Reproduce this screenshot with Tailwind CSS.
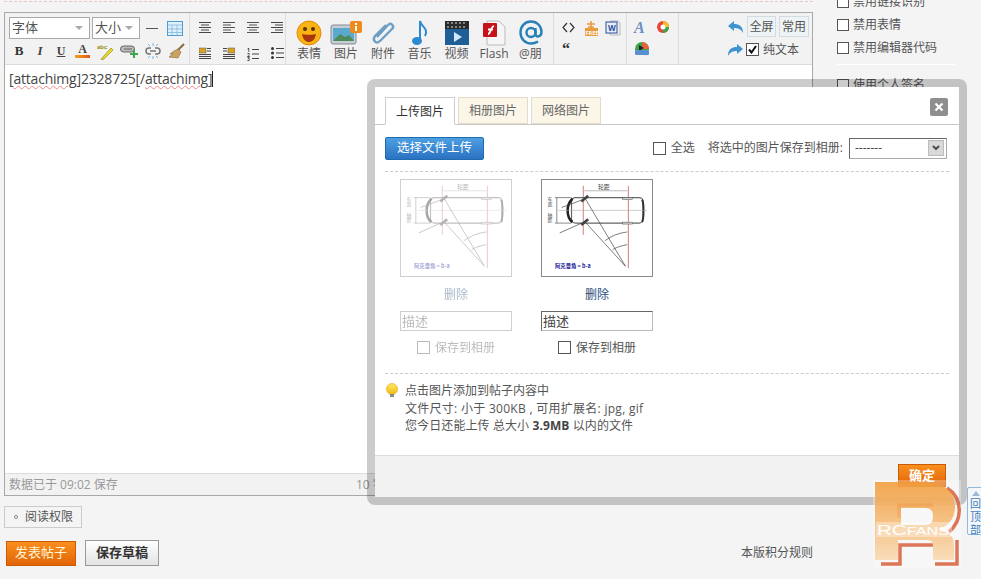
<!DOCTYPE html>
<html lang="zh">
<head>
<meta charset="utf-8">
<script src="https://cdn.jsdelivr.net/npm/@tailwindcss/browser@4"></script>
</head>
<body class="bg-[#f4f4f4]">
<svg width="0" height="0" class="absolute">
  <defs>
    <symbol id="car" viewBox="0 0 112 98">
      <g fill="none" stroke="#555" stroke-width="1">
        <path d="M43 11h44" stroke="#999" stroke-width=".7"/>
        <path d="M42 6v50M88 6v84" stroke="#b44" stroke-width=".7"/>
        <rect x="30" y="18" width="73" height="26" rx="4" stroke="#666" stroke-width="1.200"/>
        <path d="M31 19c-3 3-5 7-5 12s2 10 5 12" stroke="#222" stroke-width="2.600"/>
        <path d="M102 20c2 3 2 19 0 23" stroke="#333" stroke-width="2"/>
        <path d="M17 31h90" stroke="#aaa" stroke-width=".6"/>
        <path d="M13 18h17M13 44h17M15 18v26" stroke="#555" stroke-width=".7"/>
        <path d="M40 22l7-6M40 46l7-6" stroke="#444" stroke-width="2.600"/>
        <path d="M44 19l41 69M44 43l41 45M20 28l27-10M18 54l29-13" stroke="#444" stroke-width=".7"/>
        <path d="M64 62c7-5 14-8 23-9M72 71c5-3 10-4 15-5" stroke="#444" stroke-width=".7"/>
        <rect x="82" y="18" width="10" height="2" fill="#ccc" stroke="#555" stroke-width=".5"/>
        <rect x="82" y="43" width="10" height="2" fill="#ccc" stroke="#555" stroke-width=".5"/>
      </g>
      <text x="57" y="9" font-size="6" fill="#444" font-family="Noto Sans CJK SC">轮距</text>
      <text x="8" y="17" font-size="5" fill="#444" font-family="Noto Sans CJK SC" writing-mode="tb">车宽</text>
      <text x="8" y="33" font-size="5" fill="#444" font-family="Noto Sans CJK SC" writing-mode="tb">轴距</text>
      <text x="13" y="90" font-size="5.500" fill="#1a1a9a" font-weight="bold" font-family="Noto Sans CJK SC">阿克曼角 = b-a</text>
    </symbol>
    <symbol id="dn" viewBox="0 0 8 4"><path d="M0 0h8L4 4z" fill="#aaa"/></symbol>
    <linearGradient id="bulb" x1="0" y1="0" x2="0" y2="1"><stop offset="0" stop-color="#ffe96b"/><stop offset="1" stop-color="#f2b90d"/></linearGradient>
    <linearGradient id="rbody" x1="0" y1="0" x2="0" y2="1"><stop offset="0" stop-color="#f19a35" stop-opacity=".85"/><stop offset="1" stop-color="#f9dcb8" stop-opacity=".95"/></linearGradient>
  </defs>
</svg>

<div class="relative w-[981px] h-[579px] overflow-hidden text-[12px] text-[#444] font-['Open_Sans','Noto_Sans_CJK_SC',sans-serif]">
  <div class="flex">
    <!-- main column -->
    <main class="w-[809px] ml-[4px] shrink-0">
      <div class="h-[12px] border-t border-dashed border-[#f0c4c4] mt-[1px] -mb-[1px]"></div>
      <div class="h-[484px] border border-[#a8a8a8] flex flex-col bg-white">
        <!-- toolbar -->
        <div class="h-[52px] bg-[#f2f2f2] border-b border-[#dcdcdc] flex shrink-0">
          <!-- font group -->
          <div class="w-[181px] ml-[4px] pt-[4px] border-r border-[#dcdcdc] shrink-0">
            <div class="flex items-center h-[22px]">
              <div class="w-[81px] h-[22px] bg-white border border-[#aaa] flex items-center justify-between pl-[2px] pr-[6px] text-[13px] text-[#555]">字体<svg width="8" height="4"><use href="#dn"/></svg></div>
              <div class="w-[48px] h-[22px] ml-[2px] bg-white border border-[#aaa] flex items-center justify-between pl-[2px] pr-[6px] text-[13px] text-[#555]">大小<svg width="8" height="4"><use href="#dn"/></svg></div>
              <div class="w-[12px] h-[1px] bg-[#555] ml-[6px]"></div>
              <svg class="ml-[9px]" width="16" height="15" viewBox="0 0 16 15"><rect x=".5" y=".5" width="15" height="14" fill="#dff0fb" stroke="#4f9bd2"/><path d="M1 4h14M1 8h14M1 11.500h14M5 4v10M10 4v10" stroke="#8fc3e6"/></svg>
            </div>
            <div class="flex items-center h-[22px] mt-[1px] gap-[7px] pl-[3px]">
              <span class="w-[14px] text-center font-bold font-['Liberation_Serif'] text-[13px] text-[#333]">B</span>
              <span class="w-[14px] text-center italic font-bold font-['Liberation_Serif'] text-[13px] text-[#444]">I</span>
              <span class="w-[14px] text-center underline font-bold font-['Liberation_Serif'] text-[12px] text-[#444]">U</span>
              <span class="w-[15px] flex flex-col items-center leading-[11px] font-bold font-['Liberation_Serif'] text-[12px] text-[#444]">A<span class="w-[15px] h-[3px] bg-gradient-to-r from-[#f2a01e] to-[#e0561a]"></span></span>
              <svg width="16" height="17" viewBox="0 0 16 17"><path d="M5 15l9-10 2 2-9 9-3 1z" fill="#e8d92e" stroke="#9b8d10" stroke-width=".7"/><text x="0" y="6" font-size="6" font-weight="bold" fill="#9a8a10" font-family="Liberation Sans">abc</text></svg>
              <svg width="18" height="14" viewBox="0 0 18 14"><rect x=".5" y="2" width="14" height="6" rx="3" fill="#bbb" stroke="#666"/><path d="M4 5h8" stroke="#666"/><path d="M13 6h2v3h3v2h-3v3h-2v-3h-3V9h3z" fill="#3ca64a"/></svg>
              <svg width="16" height="16" viewBox="0 0 16 16"><path d="M6 5H4a3 3 0 000 6h2M10 5h2a3 3 0 010 6h-2M5 8h6" fill="none" stroke="#777" stroke-width="1.500"/><path d="M8 0v3M8 13v3M3 1l2 2M13 1l-2 2M3 15l2-2M13 15l-2-2" stroke="#7db3dc"/></svg>
              <svg width="17" height="16" viewBox="0 0 17 16"><path d="M16 1L9 8" stroke="#8a6a3a" stroke-width="2"/><path d="M10 6l3 3-3 6-9-1 4-3-3 0 4-3z" fill="#c9a35f" stroke="#8a6a3a" stroke-width=".6"/></svg>
            </div>
          </div>
          <!-- align group -->
          <div class="w-[96px] border-r border-[#dcdcdc] shrink-0 pl-[9px] pt-[8px] grid grid-cols-4 grid-rows-2 h-[52px] gap-y-[8px] gap-x-[10px] content-start">
            <svg width="12" height="12" viewBox="0 0 12 12"><path d="M0 1.500h12M2 4h8M0 6.500h12M2 9h8M0 11.500h12" stroke="#444"/></svg>
            <svg width="12" height="12" viewBox="0 0 12 12"><path d="M0 1.500h12M0 4h8M0 6.500h12M0 9h8M0 11.500h12" stroke="#555"/></svg>
            <svg width="12" height="12" viewBox="0 0 12 12"><path d="M0 1.500h12M2 4h8M0 6.500h12M2 9h8M0 11.500h12" stroke="#555"/></svg>
            <svg width="12" height="12" viewBox="0 0 12 12"><path d="M0 1.500h12M4 4h8M0 6.500h12M4 9h8M0 11.500h12" stroke="#444"/></svg>
            <svg width="12" height="12" viewBox="0 0 12 12"><rect x="0" y="1" width="7" height="5" fill="#d8a423" stroke="#555" stroke-width=".5"/><path d="M8 1.500h4M8 4h4M0 7.500h12M0 9.500h12M0 11.500h12" stroke="#444"/></svg>
            <svg width="12" height="12" viewBox="0 0 12 12"><rect x="5" y="1" width="7" height="5" fill="#d8a423" stroke="#555" stroke-width=".5"/><path d="M0 1.500h4M0 4h4M0 7.500h12M0 9.500h12M0 11.500h12" stroke="#444"/></svg>
            <svg width="12" height="14" viewBox="0 0 12 14"><path d="M5 2.500h7M5 7h7M5 11.500h7" stroke="#444"/><text x="0" y="5" font-size="5" fill="#333" font-weight="bold">1</text><text x="0" y="9.500" font-size="5" fill="#333" font-weight="bold">2</text><text x="0" y="14" font-size="5" fill="#333" font-weight="bold">3</text></svg>
            <svg width="13" height="12" viewBox="0 0 13 12"><circle cx="1.500" cy="1.500" r="1.500" fill="#333"/><circle cx="1.500" cy="6" r="1.500" fill="#333"/><circle cx="1.500" cy="10.500" r="1.500" fill="#333"/><path d="M5 1.500h8M5 6h8M5 10.500h8" stroke="#444"/></svg>
          </div>
          <!-- large icons -->
          <div class="w-[268px] border-r border-[#dcdcdc] shrink-0 relative flex text-[12px] text-[#555] pl-[5px]">
            <div class="w-[36px] flex flex-col items-center h-[52px] pt-[7px]">
              <svg width="26" height="26" viewBox="0 0 26 26"><circle cx="13" cy="13" r="12" fill="#f9b312" stroke="#e8890c"/><circle cx="9" cy="9" r="2" fill="#5a3206"/><circle cx="17" cy="9" r="2" fill="#5a3206"/><path d="M6 14c2 1 12 1 14 0-1 6-4 8-7 8s-6-2-7-8z" fill="#a8350e"/></svg>
              <span class="leading-[14px] mt-[1px]">表情</span>
            </div>
            <div class="w-[38px] flex flex-col items-center h-[52px] pt-[7px]">
              <svg width="32" height="26" viewBox="0 0 32 26"><rect x="1" y="5" width="25" height="19" rx="2" fill="#c5ced4" stroke="#889"/><rect x="3" y="8" width="21" height="13" fill="#5ba8cf"/><path d="M3 21l7-7 5 3 4-2 5 6z" fill="#4d8a58"/><rect x="20" y="1" width="12" height="12" rx="2" fill="#ee8b1c"/><rect x="25" y="3" width="2" height="2" fill="#fff"/><rect x="25" y="6" width="2" height="5" fill="#fff"/></svg>
              <span class="leading-[14px] mt-[1px]">图片</span>
            </div>
            <div class="w-[36px] flex flex-col items-center h-[52px] pt-[7px]">
              <svg width="26" height="26" viewBox="0 0 26 26"><path d="M7 17L18 5c3-3 7 1 4 4L10 21c-4 4-8-1-5-5L16 5" fill="none" stroke="#6f9ec4" stroke-width="2.400"/></svg>
              <span class="leading-[14px] mt-[1px]">附件</span>
            </div>
            <div class="w-[37px] flex flex-col items-center h-[52px] pt-[7px]">
              <svg width="20" height="26" viewBox="0 0 20 26"><ellipse cx="7" cy="21" rx="5" ry="4" fill="#2d8ad0"/><path d="M10 21V1c1 6 9 7 5 15" fill="none" stroke="#2d8ad0" stroke-width="2"/></svg>
              <span class="leading-[14px] mt-[1px]">音乐</span>
            </div>
            <div class="w-[37px] flex flex-col items-center h-[52px] pt-[7px]">
              <svg width="26" height="26" viewBox="0 0 26 26"><rect x="1" y="1" width="24" height="8" fill="#2a2a2a"/><path d="M4 2v6M8 2v6M12 2v6M16 2v6M20 2v6" stroke="#ddd" stroke-dasharray="2 2"/><rect x="1" y="9" width="24" height="16" fill="#1f5f96"/><path d="M10 12l8 5-8 5z" fill="#cfe8fa"/></svg>
              <span class="leading-[14px] mt-[1px]">视频</span>
            </div>
            <div class="w-[38px] flex flex-col items-center h-[52px] pt-[7px]">
              <svg width="26" height="26" viewBox="0 0 26 26"><path d="M6 1h12l6 6v18H6z" fill="#f5f5f5" stroke="#bbb"/><rect x="2" y="3" width="14" height="14" rx="1" fill="#c4141a"/><path d="M7 14c3 0 2-7 6-8M7 9.500h5" stroke="#fff" stroke-width="1.800" fill="none"/></svg>
              <span class="leading-[14px] mt-[1px]">Flash</span>
            </div>
            <div class="w-[35px] flex flex-col items-center h-[52px] pt-[7px]">
              <svg width="24" height="26" viewBox="0 0 24 26"><circle cx="12" cy="12.500" r="4.500" fill="none" stroke="#2580b8" stroke-width="2.400"/><path d="M16.500 8v6c0 4 6 3 6-2 0-6-4.500-10.500-10.500-10.500S1.500 6 1.500 12.500 6 23.500 12 23.500c3 0 5-.8 7-2" fill="none" stroke="#2580b8" stroke-width="2.400"/></svg>
              <span class="leading-[14px] mt-[1px]">@朋</span>
            </div>
          </div>
          <!-- small tools -->
          <div class="w-[73px] border-r border-[#dcdcdc] shrink-0 grid grid-cols-3 content-start pl-[8px] pt-[7px] gap-y-[4px]">
            <svg class="mt-[2px]" width="13" height="11" viewBox="0 0 13 11"><path d="M5 1L1 5.500 5 10M8 1l4 4.500L8 10" fill="none" stroke="#333" stroke-width="1.200"/></svg>
            <svg width="16" height="16" viewBox="0 0 16 16"><rect x="2" y="8" width="13" height="8" fill="#e89a3c"/><path d="M8 1v7M4 4h8M5 7h6" stroke="#e89a3c" stroke-width="1.500"/><text x="2.500" y="14.500" font-size="5.500" fill="#fff" font-weight="bold">FREE</text></svg>
            <svg width="16" height="16" viewBox="0 0 16 16"><path d="M5 1h8l2 2v12H5z" fill="#eee" stroke="#bbb"/><rect x="1" y="2" width="11" height="11" fill="#e6eefb" stroke="#2b4f9a"/><text x="3" y="11" font-size="8" fill="#2b4f9a" font-weight="bold">W</text></svg>
            <span class="h-[14px] text-[16px] leading-[18px] font-bold text-[#333] font-['Liberation_Serif']">“</span>
          </div>
          <!-- color tools -->
          <div class="w-[52px] border-r border-[#dcdcdc] shrink-0 grid grid-cols-2 content-start pl-[7px] pt-[7px] gap-y-[4px]">
            <span class="h-[16px] text-[16px] leading-[16px] italic font-bold text-[#6d8fc7] font-['Liberation_Serif']">A</span>
            <svg width="14" height="14" viewBox="0 0 14 14"><circle cx="7" cy="7" r="6" fill="#e8453c"/><path d="M7 7V1a6 6 0 016 6z" fill="#f6c026"/><path d="M7 7h6a6 6 0 01-6 6z" fill="#3ca64a"/><circle cx="7" cy="7" r="2.500" fill="#fff"/></svg>
            <svg width="16" height="16" viewBox="0 0 16 16"><path d="M1 9a7 7 0 0114 0v1H1z" fill="#3ca64a"/><path d="M8 2a7 7 0 017 7H8z" fill="#e8603c"/><path d="M5 5l5 3-5 3z" fill="#222"/><rect x="1" y="10" width="14" height="5" rx="1" fill="#5a8fd0"/></svg>
          </div>
          <!-- right tools -->
          <div class="flex-1 flex flex-col items-end pr-[3px] pt-[3px]">
            <div class="flex items-center h-[21px] gap-[3px]">
              <svg width="15" height="12" viewBox="0 0 15 12"><path d="M6 0v3c5 0 9 2 9 9-2-4-5-5-9-5v3L0 5z" fill="#3f93d0"/></svg>
              <span class="w-[29px] h-[21px] border border-[#d3dce3] bg-[#eef3f6] text-center leading-[19px] text-[#555] ml-[1px]">全屏</span>
              <span class="w-[30px] h-[21px] border border-[#d3dce3] bg-[#eef3f6] text-center leading-[19px] text-[#555]">常用</span>
            </div>
            <div class="flex items-center h-[21px] mt-[2px] gap-[3px] mr-[10px]">
              <svg width="15" height="12" viewBox="0 0 15 12"><path d="M9 0v3C4 3 0 5 0 12c2-4 5-5 9-5v3l6-5z" fill="#3f93d0"/></svg>
              <span class="w-[13px] h-[13px] border border-[#555] bg-white flex items-center justify-center"><svg width="9" height="9" viewBox="0 0 9 9"><path d="M1 4.500l2.500 3L8 1" fill="none" stroke="#111" stroke-width="2"/></svg></span>
              <span class="text-[#555] ml-[1px]">纯文本</span>
            </div>
          </div>
        </div>
        <!-- text area -->
        <div class="flex-1 bg-white pl-[4px] pt-[4px] text-[14px] leading-[19px] text-[#444] border-b border-[#dcdcdc]">
          <span class="tracking-[-0.2px]">[<span class="underline decoration-wavy decoration-[#e88] decoration-1">attachimg</span>]2328725[/<span class="underline decoration-wavy decoration-[#e88] decoration-1">attachimg</span>]</span><span class="inline-block w-[1px] h-[16px] bg-[#222] align-[-3px]"></span>
        </div>
        <!-- status -->
        <div class="h-[21px] bg-[#f2f2f2] flex items-center px-[4px] text-[#999] shrink-0 whitespace-nowrap">
          <span class="w-[347px]">数据已于 09:02 保存</span>
          <span>10 字节</span>
        </div>
      </div>
      <div class="mt-[10px] w-[78px] h-[22px] border border-[#ccc] flex items-center pl-[9px] text-[#555]">
        <span class="w-[4px] h-[4px] rounded-full border border-[#888] mr-[7px]"></span>阅读权限
      </div>
      <div class="flex items-center mt-[12px] relative pl-[2px]">
        <button class="w-[70px] h-[25px] border border-[#c95b05] bg-gradient-to-b from-[#f98f1d] to-[#e36406] text-[#fff6d9] text-[13px]">发表帖子</button>
        <button class="w-[74px] h-[26px] ml-[9px] border border-[#999] bg-gradient-to-b from-[#fff] to-[#e3e3e3] text-[#333] text-[13px] font-bold">保存草稿</button>
        <span class="ml-auto mt-[-1px] text-[#555]">本版积分规则</span>
      </div>
    </main>
    <!-- right side -->
    <aside class="ml-[24px] w-[120px] text-[#555] text-[12px] shrink-0 -mt-[10px] whitespace-nowrap">
      <div class="flex items-center h-[23px] gap-[4px]"><span class="w-[12px] h-[12px] border border-[#555] bg-white"></span>禁用链接识别</div>
      <div class="flex items-center h-[23px] gap-[4px]"><span class="w-[12px] h-[12px] border border-[#555] bg-white"></span>禁用表情</div>
      <div class="flex items-center h-[23px] gap-[4px]"><span class="w-[12px] h-[12px] border border-[#555] bg-white"></span>禁用编辑器代码</div>
      <div class="w-[118px] border-t border-white mt-[5px]"></div>
      <div class="flex items-center h-[23px] gap-[4px] mt-[8px]"><span class="w-[12px] h-[12px] border border-[#555] bg-white"></span>使用个人签名</div>
    </aside>
  </div>

  <!-- modal -->
  <section class="absolute left-[367px] top-[79px] w-[600px] h-[426px] border-[8px] border-black/20 rounded-[8px] bg-white bg-clip-padding flex flex-col text-[#555]">
    <div class="h-[38px] border-b border-[#c8c8c8] relative flex items-end pl-[10px] gap-[3px] shrink-0">
      <span class="w-[70px] h-[28px] -mb-[1px] border border-[#cdcdcd] border-b-white bg-white text-center leading-[27px] text-[#333]">上传图片</span>
      <span class="w-[70px] h-[27px] border border-[#e2dcc8] bg-[#fbf6e7] text-center leading-[26px] text-[#666]">相册图片</span>
      <span class="w-[70px] h-[27px] border border-[#e2dcc8] bg-[#fbf6e7] text-center leading-[26px] text-[#666]">网络图片</span>
      <span class="absolute right-[11px] top-[11px] w-[18px] h-[18px] rounded-[2px] bg-[#8f8f8f] flex items-center justify-center"><svg width="10" height="10" viewBox="0 0 10 10"><path d="M1.500 1.500l7 7M8.500 1.500l-7 7" stroke="#fff" stroke-width="2.200"/></svg></span>
    </div>
    <div class="flex-1 px-[10px] flex flex-col">
      <div class="flex items-center h-[47px] border-b border-dashed border-[#ccc]">
        <button class="w-[99px] h-[23px] rounded-[2px] border border-[#1e6bb0] bg-gradient-to-b from-[#4e9fe2] to-[#2a72c2] text-white text-[12.500px] leading-[20px]">选择文件上传</button>
        <span class="ml-auto w-[13px] h-[13px] border border-[#555]"></span>
        <span class="ml-[5px]">全选</span>
        <span class="ml-[13px]">将选中的图片保存到相册:</span>
        <div class="ml-[6px] mr-[2px] w-[98px] h-[21px] border border-[#aaa] border-t-[#666] border-l-[#666] flex items-center pl-[5px] pr-[2px] justify-between text-[#444]">-------
          <span class="w-[16px] h-[16px] bg-[#d9d9d9] border border-[#bbb] flex items-center justify-center"><svg width="8" height="6" viewBox="0 0 8 6"><path d="M1 1l3 3 3-3" fill="none" stroke="#444" stroke-width="1.800"/></svg></span>
        </div>
      </div>
      <div class="flex h-[202px] border-b border-dashed border-[#ccc] pl-[15px] pt-[7px] gap-[29px]">
        <div class="w-[112px] flex flex-col items-center opacity-40">
          <div class="w-[112px] h-[98px] border border-[#888] bg-white"><svg class="w-full h-full"><use href="#car"/></svg></div>
          <span class="mt-[9px] leading-[17px] text-[#2a4b78]">删除</span>
          <div class="mt-[8px] w-[112px] h-[20px] border border-[#888] leading-[18px] text-[13px] pl-[1px]">描述</div>
          <div class="flex items-center mt-[8px] leading-[17px]"><span class="w-[13px] h-[13px] border border-[#555] mr-[5px]"></span>保存到相册</div>
        </div>
        <div class="w-[112px] flex flex-col items-center">
          <div class="w-[112px] h-[98px] border border-[#888] bg-white"><svg class="w-full h-full"><use href="#car"/></svg></div>
          <span class="mt-[9px] leading-[17px] text-[#2a4b78]">删除</span>
          <div class="mt-[8px] w-[112px] h-[20px] border border-[#bbb] border-t-[#666] border-l-[#666] leading-[18px] text-[13px] pl-[1px] text-[#444]">描述</div>
          <div class="flex items-center mt-[8px] leading-[17px]"><span class="w-[13px] h-[13px] border border-[#555] mr-[5px]"></span>保存到相册</div>
        </div>
      </div>
      <div class="pt-[8px] leading-[17.500px] text-[#555]">
        <div class="flex items-center">
          <svg class="mr-[6px]" width="14" height="15" viewBox="0 0 14 15"><circle cx="7" cy="6" r="5.500" fill="url(#bulb)" stroke="#d8a30f" stroke-width=".6"/><rect x="5" y="11" width="4" height="3" fill="#888"/></svg>点击图片添加到帖子内容中
        </div>
        <div class="pl-[20px] tracking-[0.28px]">文件尺寸: 小于 300KB , 可用扩展名: jpg, gif</div>
        <div class="pl-[20px] tracking-[0.1px]">您今日还能上传 总大小 <b class="text-[#444]">3.9MB</b> 以内的文件</div>
      </div>
    </div>
    <div class="h-[42px] bg-[#f2f2f2] border-t border-[#ddd] flex justify-end items-start pr-[13px] pt-[8px] shrink-0">
      <button class="w-[48px] h-[23px] border border-[#c95b05] bg-gradient-to-b from-[#f98f1d] to-[#e36406] text-white font-bold text-[13px] leading-[21px]">确定</button>
    </div>
  </section>

  <!-- back to top -->
  <div class="absolute left-[967px] top-[487px] w-[20px] h-[48px] border border-[#8fb8dc] rounded-[2px] bg-[#f4f7fa] text-[#3d7fbf] text-[11px] leading-[13px] pl-[2px] pt-[3px]">
    <div class="w-0 h-0 ml-[2px] border-x-[4px] border-x-transparent border-b-[5px] border-b-[#9fb9d2] mb-[1px]"></div>
    回<br>顶<br>部
  </div>

  <!-- watermark -->
  <div class="absolute left-[873px] top-[480px] w-[88px] h-[88px]">
    <svg width="88" height="88" viewBox="0 0 88 88">
      <rect width="88" height="88" fill="#fff" opacity=".3"/>
      <g fill="none" stroke="#d9603a" stroke-width="3.500" opacity=".85">
        <path d="M74 8C90 18 90 40 76 52"/>
        <path d="M26 38V25H60"/>
        <path d="M60 65H27V84H8"/>
        <path d="M62 84H84V60"/>
      </g>
      <path fill-rule="evenodd" d="M2 2H50C72 2 82 12 82 27C82 38 76 46 66 49C76 52 81 56 81 66V80H60V66C60 62 58 60 54 60H25V80H2ZM28 28V45H52C58 45 60 42 60 36C60 31 58 28 52 28Z" fill="url(#rbody)"/>
      <rect x="3" y="42" width="76" height="15" fill="#fff" opacity=".35"/>
      <text x="4" y="55" font-size="14" fill="#fff" font-family="Liberation Sans" textLength="72" lengthAdjust="spacingAndGlyphs">RC<tspan font-size="11">FANS</tspan></text>
    </svg>
  </div>
</div>
</body>
</html>
